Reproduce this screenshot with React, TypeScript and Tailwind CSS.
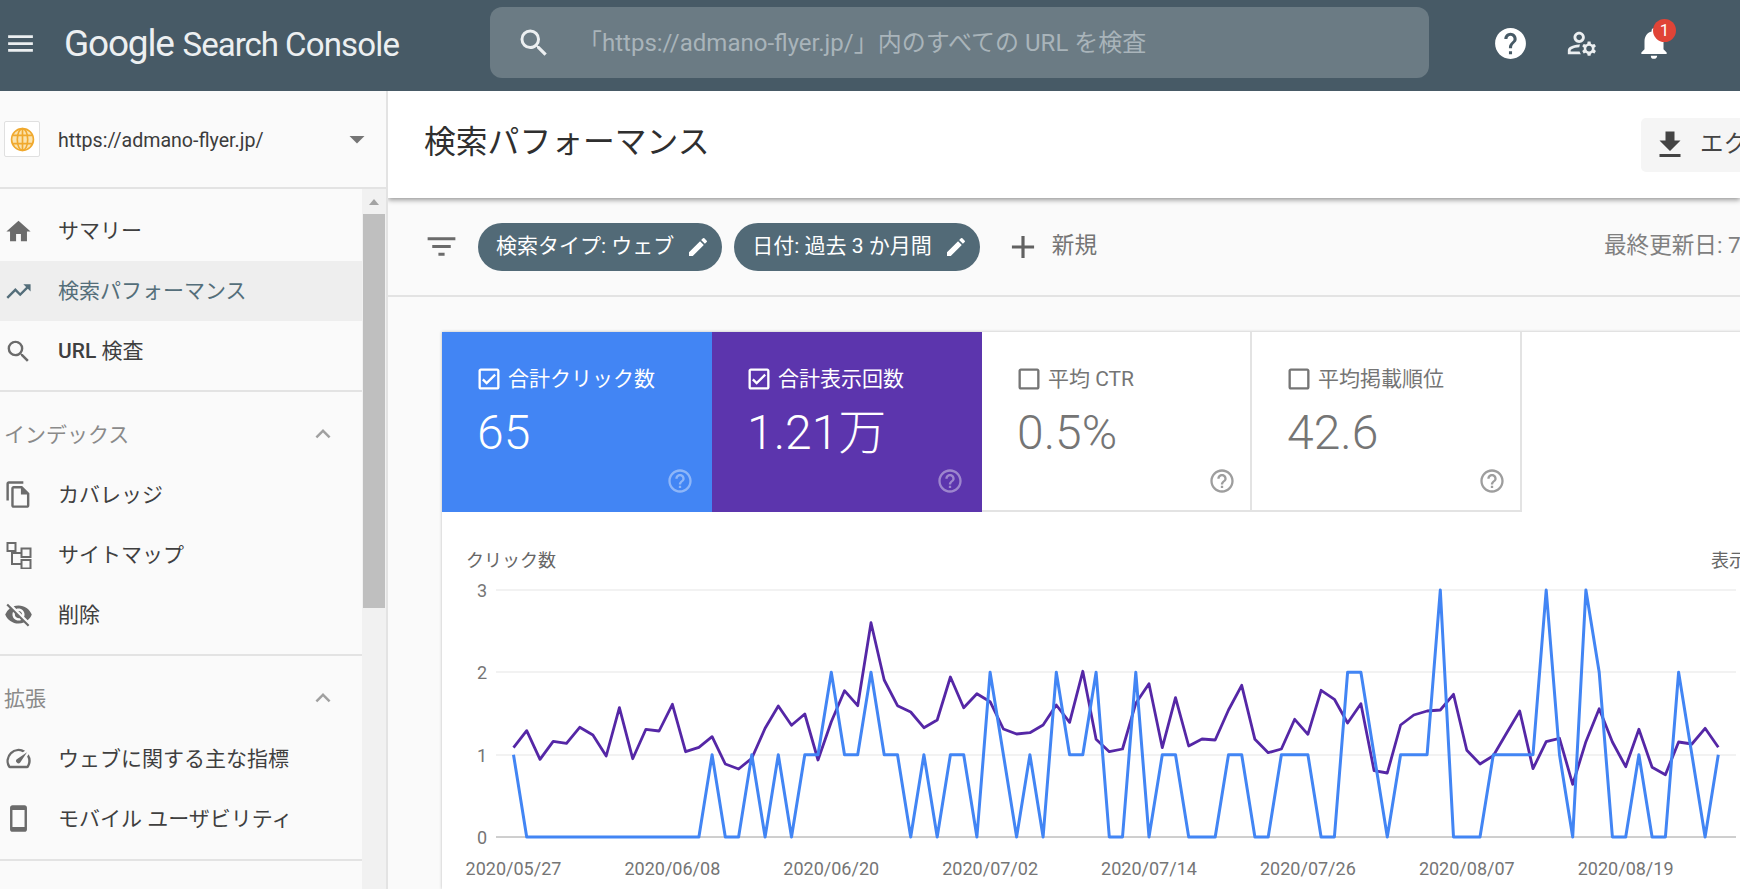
import React from "react";
import {
  MdMenu,
  MdSearch,
  MdHelp,
  MdHelpOutline,
  MdOutlineManageAccounts,
  MdNotifications,
  MdHome,
  MdTrendingUp,
  MdOutlineFileCopy,
  MdVisibilityOff,
  MdSpeed,
  MdSmartphone,
  MdExpandLess,
  MdFilterList,
  MdEdit,
  MdAdd,
  MdGetApp,
  MdOutlineCheckBox,
  MdCheckBoxOutlineBlank,
  MdArrowDropDown,
} from "react-icons/md";

const font = "font-['Roboto','Noto_Sans_CJK_JP',sans-serif]";

const clicks = [
  1, 0, 0, 0, 0, 0, 0, 0, 0, 0, 0, 0, 0, 0, 0, 1, 0, 0, 1, 0, 1, 0, 1, 1, 2, 1, 1, 2, 1, 1, 0, 1, 0, 1, 1, 0, 2, 1, 0, 1, 0, 2, 1, 1, 2, 0,
  0, 2, 0, 1, 1, 0, 0, 0, 1, 1, 0, 0, 1, 1, 1, 0, 0, 2, 2, 1, 0, 1, 1, 1, 3, 0, 0, 0, 1, 1, 1, 1, 3, 1, 0, 3, 2, 0, 0, 1, 0, 0, 2, 1, 0, 1,
];

// y positions measured off the reference, in thirds of a pixel from y=540
const impressions = [
  623, 572, 658, 604, 610, 562, 585, 648, 503, 656, 568, 573, 493, 635, 622, 590, 672, 687, 655, 565, 498, 556, 522, 660, 545, 452, 497, 248, 420, 497, 516, 563, 540, 411, 503, 461, 485, 567, 582, 578, 555, 495, 547, 394, 598, 635,
  627, 490, 431, 623, 473, 618, 597, 600, 510, 436, 598, 638, 627, 538, 583, 451, 478, 549, 491, 692, 699, 555, 525, 513, 510, 463, 631, 672, 647, 580, 513, 686, 605, 595, 733, 605, 506, 606, 680, 568, 682, 704, 606, 612, 565, 622,
];

const dates = ["2020/05/27", "2020/06/08", "2020/06/20", "2020/07/02", "2020/07/14", "2020/07/26", "2020/08/07", "2020/08/19"];

const pointX = (i: number) => 71.5 + i * 13.24;

function SitemapIcon({ className }: { className?: string }) {
  return (
    <svg viewBox="0 0 29 29" className={className} fill="none" stroke="currentColor" strokeWidth="2">
      <rect x="3.5" y="3" width="8" height="8" />
      <rect x="17.5" y="8.5" width="9" height="8.5" />
      <rect x="17.5" y="20" width="9" height="8.5" />
      <path d="M8 11v13h9.5M8 13h9.5" />
    </svg>
  );
}

function Globe() {
  return (
    <svg viewBox="0 0 24 24" className="w-[25px] h-[25px]" fill="none" stroke="#f0a92e" strokeWidth="1.6">
      <circle cx="12" cy="12" r="10.5" fill="#fbe3ae" />
      <ellipse cx="12" cy="12" rx="5" ry="10.5" />
      <path d="M12 1.5v21M2 8h20M2 16h20" />
    </svg>
  );
}

function NavItem({ icon, label, active, top }: { icon: React.ReactNode; label: React.ReactNode; active?: boolean; top?: boolean }) {
  return (
    <div className={`h-[60px] flex items-center pl-[4px] ${active ? "bg-[#eeeeee] text-[#546e7a]" : "text-[#3f3f3f]"}`}>
      <div className={`w-[54px] shrink-0 ${active ? "text-[#546e7a]" : "text-[#6b6b6b]"}`}>{icon}</div>
      <span className={`${top ? "" : "pt-[2px]"} text-[21px] leading-none whitespace-nowrap`}>{label}</span>
    </div>
  );
}

function SectionHeader({ label }: { label: string }) {
  return (
    <div className="h-[60px] mt-[12px] flex items-center justify-between pl-[4px] pr-[24px] text-[#8a8a8a]">
      <span className="pt-[2px] text-[21px] leading-none">{label}</span>
      <MdExpandLess className="w-[30px] h-[30px] text-[#a0a0a0]" />
    </div>
  );
}

function Sidebar() {
  const icon = "w-[29px] h-[29px]";
  return (
    <aside className="w-[388px] shrink-0 bg-[#fafafa] border-r-2 border-[#e3e3e3] flex flex-col">
      <div className="h-[98px] shrink-0 border-b-2 border-[#e3e3e3] flex items-center pl-[4px] pr-[11px]">
        <div className="w-[36px] h-[36px] bg-white border border-[#e0e0e0] rounded-[2px] flex items-center justify-center">
          <Globe />
        </div>
        <span className="ml-[18px] pt-[3px] text-[19.6px] text-[#3c3c3c] leading-none">https://admano-flyer.jp/</span>
        <MdArrowDropDown className="ml-auto w-[36px] h-[36px] text-[#757575]" />
      </div>
      <div className="flex flex-1 min-h-0">
        <nav className="w-[362px] shrink-0 pt-[12px]">
          <div className="border-b-2 border-[#e3e3e3] pb-[9px]">
            <NavItem top icon={<MdHome className={icon} />} label="サマリー" />
            <NavItem top icon={<MdTrendingUp className={icon} />} label="検索パフォーマンス" active />
            <NavItem
              top
              icon={<MdSearch className={icon} />}
              label={
                <>
                  <span className="font-medium">URL</span> 検査
                </>
              }
            />
          </div>
          <div className="border-b-2 border-[#e3e3e3] pb-[10px]">
            <SectionHeader label="インデックス" />
            <NavItem icon={<MdOutlineFileCopy className={icon} />} label="カバレッジ" />
            <NavItem icon={<SitemapIcon className={icon} />} label="サイトマップ" />
            <NavItem icon={<MdVisibilityOff className={icon} />} label="削除" />
          </div>
          <div className="border-b-2 border-[#e3e3e3] pb-[11px]">
            <SectionHeader label="拡張" />
            <NavItem icon={<MdSpeed className={icon} />} label="ウェブに関する主な指標" />
            <NavItem icon={<MdSmartphone className={icon} />} label="モバイル ユーザビリティ" />
          </div>
        </nav>
        <div className="flex-1 bg-[#f1f1f1] px-[1px]">
          <div className="h-[25px] flex items-center justify-center">
            <div className="w-0 h-0 border-x-[5px] border-x-transparent border-b-[6px] border-b-[#a3a3a3]" />
          </div>
          <div className="h-[394px] bg-[#bfbfbf]" />
        </div>
      </div>
    </aside>
  );
}

function Chip({ label }: { label: string }) {
  return (
    <div className="h-[48px] pl-[18px] pr-[12px] rounded-full bg-[#526a77] text-white flex items-center gap-[12px] shrink-0">
      <span className="text-[21px] leading-none whitespace-nowrap">{label}</span>
      <MdEdit className="w-[24px] h-[24px] shrink-0" />
    </div>
  );
}

function Tile({
  label,
  value,
  checked,
  color,
}: {
  label: string;
  value: string;
  checked?: boolean;
  color?: string;
}) {
  const Box = checked ? MdOutlineCheckBox : MdCheckBoxOutlineBlank;
  return (
    <div className={`w-[270px] h-[180px] shrink-0 pl-[33px] pt-[32px] flex flex-col ${color ? `${color} pr-[18px]` : "bg-white text-[#757575] border-r-2 border-b-2 border-[#e3e3e3] pr-[14px]"}`}>
      <div className="flex items-center gap-[5px] h-[30px]">
        <Box className="w-[28px] h-[28px] shrink-0" />
        <span className="text-[21px] leading-none whitespace-nowrap">{label}</span>
      </div>
      <div className="mt-[11px] ml-[2px] text-[48px] font-light leading-[56px] whitespace-nowrap">{value}</div>
      <MdHelpOutline className={`mt-auto self-end w-[28px] h-[28px] shrink-0 ${color ? "mb-[17px] opacity-40" : "mb-[15px] text-[#9e9e9e]"}`} />
    </div>
  );
}

function Chart() {
  const blue = clicks.map((v, i) => `${pointX(i).toFixed(1)},${(262 - v * 82.33).toFixed(1)}`).join(" ");
  const purple = impressions.map((v, i) => `${pointX(i).toFixed(1)},${(v / 3 - 35).toFixed(1)}`).join(" ");
  return (
    <svg width="1298" height="314" className="block mt-[2px]">
      {[
        [15, "3"],
        [97, "2"],
        [180, "1"],
      ].map(([y, t]) => (
        <g key={t}>
          <line x1="54" x2="1294" y1={y} y2={y} stroke="#eeeeee" strokeWidth="1.6" />
          <text x="45" y={Number(y) + 7} textAnchor="end" fontSize="18" fill="#757575">
            {t}
          </text>
        </g>
      ))}
      <line x1="54" x2="1294" y1="262" y2="262" stroke="#9e9e9e" strokeWidth="1" />
      <text x="45" y="269" textAnchor="end" fontSize="18" fill="#757575">
        0
      </text>
      <polyline points={purple} fill="none" stroke="#5527a6" strokeWidth="2.8" strokeLinejoin="round" />
      <polyline points={blue} fill="none" stroke="#4285f4" strokeWidth="3" strokeLinejoin="round" />
      {dates.map((d, i) => (
        <text key={d} x={pointX(i * 12)} y="300" textAnchor="middle" fontSize="18" fill="#757575">
          {d}
        </text>
      ))}
    </svg>
  );
}

export default function App() {
  return (
    <div className={`w-[1740px] h-[889px] overflow-hidden flex flex-col bg-[#fafafa] ${font}`}>
      <header className="h-[91px] shrink-0 bg-[#475a66] flex items-center pb-[5px] text-white">
        <MdMenu className="ml-[4px] w-[33px] h-[33px] text-[#eceff1] shrink-0" />
        <div className="ml-[27px] w-[336px] shrink-0 flex items-baseline text-[#eceff1] whitespace-nowrap">
          <span className="text-[37px] leading-none tracking-[-1.2px]">Google</span>
          <span className="ml-[9px] text-[33px] leading-none tracking-[-1px]">Search</span>
          <span className="ml-[7px] text-[33px] leading-none tracking-[-0.8px]">Console</span>
        </div>
        <div className="ml-[90px] self-start mt-[7px] w-[939px] h-[71px] shrink-0 rounded-[12px] bg-[#6b7b84] flex items-center pl-[26px]">
          <MdSearch className="w-[36px] h-[36px] text-[#eceff1] shrink-0" />
          <span className="ml-[26px] text-[24px] leading-none text-[#a9b4ba] whitespace-nowrap">「https://admano-flyer.jp/」内のすべての URL を検査</span>
        </div>
        <MdHelp className="ml-[63px] w-[37px] h-[37px] shrink-0" />
        <MdOutlineManageAccounts className="ml-[36px] w-[34px] h-[34px] text-[#eceff1] shrink-0" />
        <div className="relative ml-[36px] w-[38px] h-[38px] shrink-0">
          <MdNotifications className="w-[38px] h-[38px]" />
          <span className="absolute -top-[5px] left-[18px] w-[23px] h-[23px] rounded-full bg-[#e04437] text-white text-[17px] leading-[23px] text-center">1</span>
        </div>
      </header>
      <div className="flex flex-1 min-h-0">
        <Sidebar />
        <main className="flex-1 min-w-0 overflow-hidden">
          <div className="relative h-[107px] bg-white shadow-[0_2px_5px_rgba(0,0,0,0.4)] flex items-center pl-[36px] whitespace-nowrap">
            <h1 className="w-[284px] shrink-0 mb-[4px] text-[31.8px] leading-none text-[#2f2f2f]">検索パフォーマンス</h1>
            <div className="ml-[933px] h-[54px] w-[160px] shrink-0 rounded-[5px] bg-[#f5f5f5] flex items-center pl-[11px] gap-[12px] text-[#444444]">
              <MdGetApp className="w-[36px] h-[36px] shrink-0" />
              <span className="text-[23.5px] leading-none">エクスポート</span>
            </div>
          </div>
          <div className="h-[99px] border-b-2 border-[#e3e3e3] flex items-center pl-[35px] whitespace-nowrap">
            <MdFilterList className="w-[37px] h-[37px] text-[#6b6b6b] shrink-0" />
            <div className="ml-[18px] flex gap-[12px] shrink-0">
              <Chip label="検索タイプ: ウェブ" />
              <Chip label="日付: 過去 3 か月間" />
            </div>
            <MdAdd className="ml-[24px] w-[38px] h-[38px] text-[#616161] shrink-0" />
            <span className="ml-[10px] mb-[1px] text-[22.6px] leading-none text-[#757575]">新規</span>
            <span className="ml-[507px] text-[22.6px] leading-none text-[#808080]">最終更新日: 7 時間前</span>
          </div>
          <section className="ml-[54px] mt-[35px] w-[1400px] bg-white shadow-[0_0_3px_rgba(0,0,0,0.25)]">
            <div className="flex">
              <Tile label="合計クリック数" value="65" checked color="bg-[#4285f4] text-white" />
              <Tile label="合計表示回数" value="1.21万" checked color="bg-[#5c35ad] text-white" />
              <Tile label="平均 CTR" value="0.5%" />
              <Tile label="平均掲載順位" value="42.6" />
            </div>
            <div className="flex justify-between pt-[37px] pl-[24px] pr-[59px] text-[18px] leading-[24px] text-[#666666]">
              <span>クリック数</span>
              <span>表示回数</span>
            </div>
            <Chart />
          </section>
        </main>
      </div>
    </div>
  );
}
